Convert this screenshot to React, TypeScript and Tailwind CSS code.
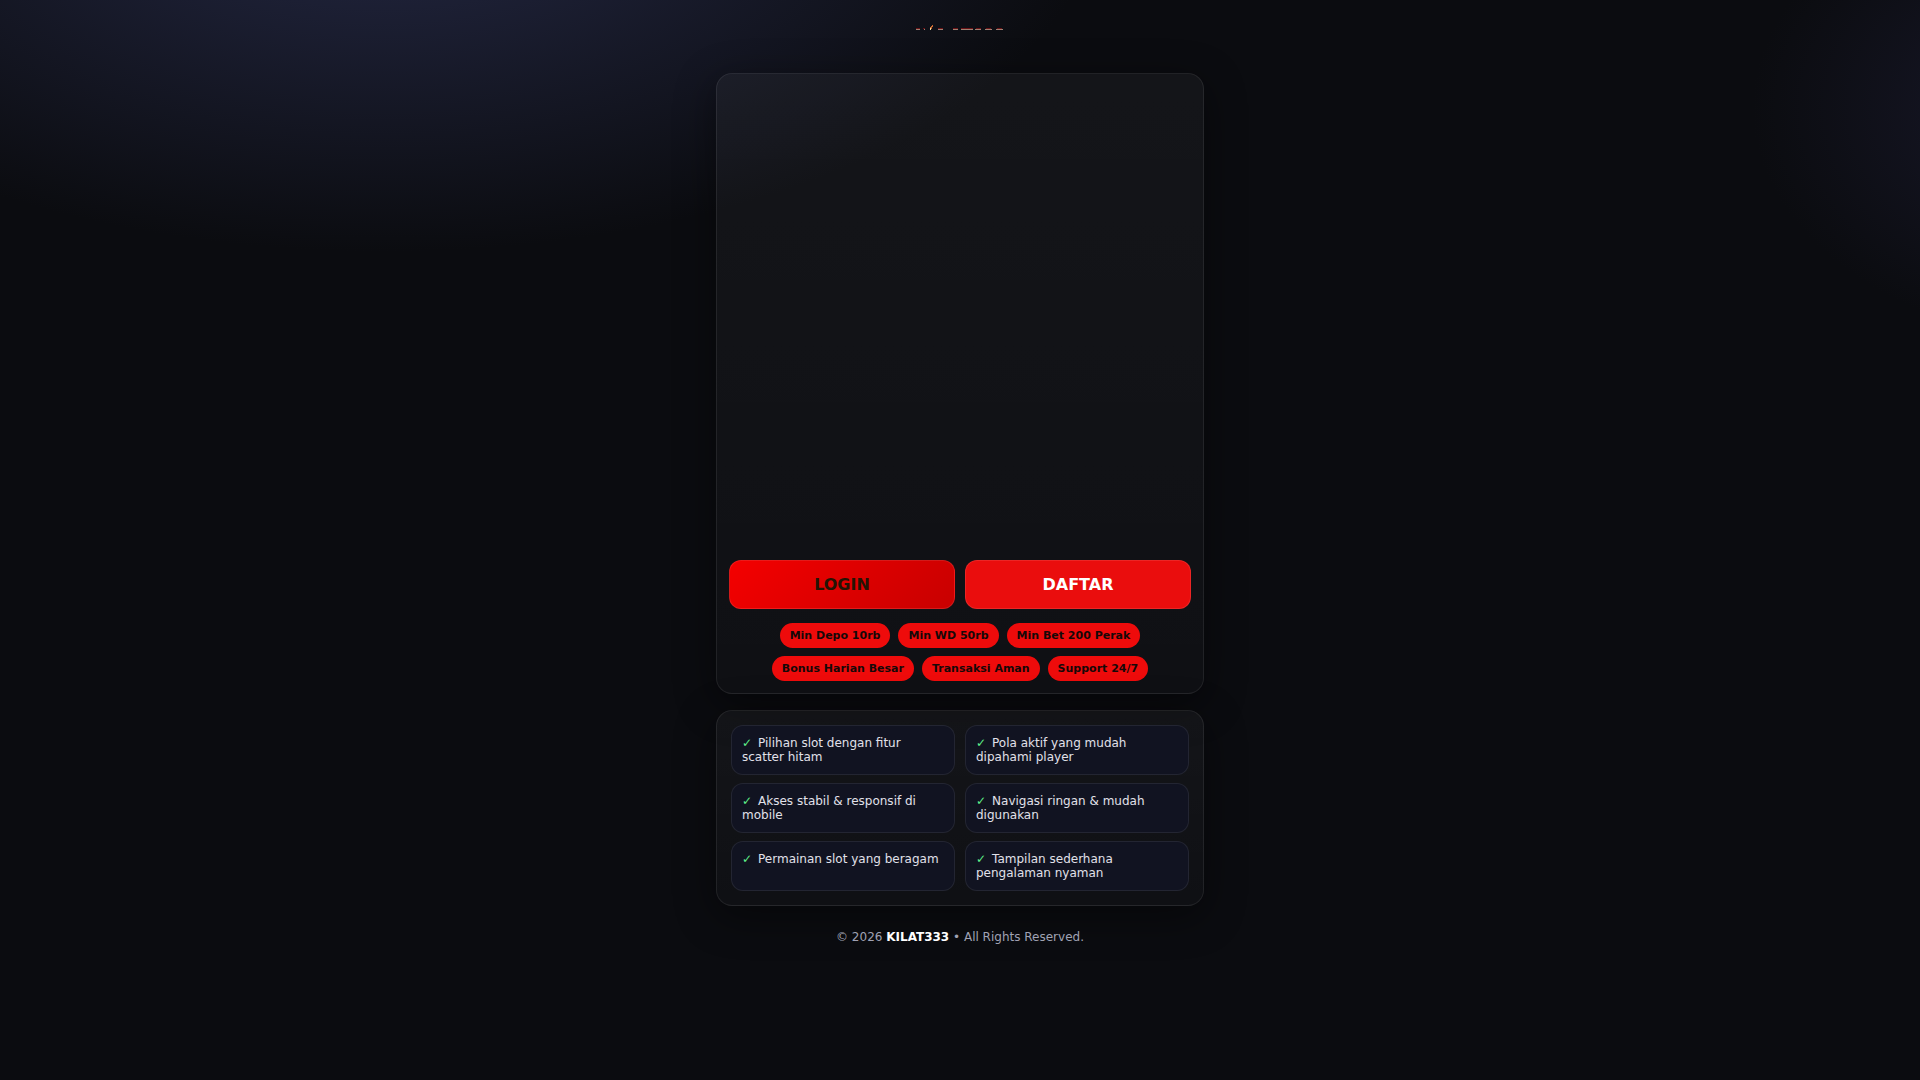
const actions = [
  {
    label: "LOGIN",
    className: "bg-linear-135 from-[#f40000] to-[#c80000] text-[#241404]",
  },
  {
    label: "DAFTAR",
    className: "bg-[#ea0d0d] text-white",
  },
];

const chips = [
  "Min Depo 10rb",
  "Min WD 50rb",
  "Min Bet 200 Perak",
  "Bonus Harian Besar",
  "Transaksi Aman",
  "Support 24/7",
];

const features = [
  "Pilihan slot dengan fitur scatter hitam",
  "Pola aktif yang mudah dipahami player",
  "Akses stabil & responsif di mobile",
  "Navigasi ringan & mudah digunakan",
  "Permainan slot yang beragam",
  "Tampilan sederhana pengalaman nyaman",
];

function Logo() {
  return (
    <svg width="88" height="6" viewBox="0 0 88 6" role="img" aria-label="KILAT333">
      <path d="M0 4.5h4M7 4.5h2M22 4.5h5M37 4.5h5M45 4.5h12M60 4.5h5M70 4.5h5M81 4.5h5" stroke="#6a1215" />
      <path d="M0 5.5h4M8 5.5h1M22 5.5h5M37 5.5h5M45 5.5h12M59 5.5h6M69 5.5h7M80 5.5h7" stroke="#a08072" />
      <path d="M16 1h1v2h-1v2h-2v-2h1v-1h1z" fill="#c5682f" />
      <path d="M14 4h1v2h-1z" fill="#f3d9a0" />
    </svg>
  );
}

export default function App() {
  return (
    <div className="min-h-screen bg-[#0b0c10] bg-[radial-gradient(1200px_600px_at_20%_-10%,#242844_0%,transparent_60%),radial-gradient(600px_400px_at_110%_10%,#1a1a2e_0%,transparent_60%)] font-['DejaVu_Sans',sans-serif] text-[#e1e1ea]">
      <div className="mx-auto max-w-[520px] px-4 pt-6">
        <header className="flex h-[49px] justify-center">
          <Logo />
        </header>

        <main className="flex flex-col gap-4">
          <section className="rounded-2xl border border-white/8 bg-linear-to-b from-white/4 to-white/2 p-3 shadow-[0_10px_40px_rgba(0,0,0,0.45)]">
            {/* Banner area */}
            <div className="aspect-square w-full" />
            <div className="mt-3 grid grid-cols-2 gap-2.5">
              {actions.map((action) => (
                <a
                  key={action.label}
                  href="#"
                  className={`rounded-xl border border-white/10 py-3 text-center text-base leading-[23px] font-bold ${action.className}`}
                >
                  {action.label}
                </a>
              ))}
            </div>
            <div className="mt-3.5 flex flex-wrap justify-center gap-2">
              {chips.map((chip) => (
                <span
                  key={chip}
                  className="rounded-full bg-[#ee0b0b] px-2.5 py-1.5 text-[11px] leading-[13px] font-bold text-[#160808]"
                >
                  {chip}
                </span>
              ))}
            </div>
          </section>

          <section className="rounded-2xl border border-white/8 bg-linear-to-b from-white/4 to-white/2 p-3.5 shadow-[0_10px_40px_rgba(0,0,0,0.45)]">
            <ul className="grid grid-cols-2 gap-x-2.5 gap-y-2">
              {features.map((feature) => (
                <li
                  key={feature}
                  className="rounded-xl border border-white/8 bg-[#111321] p-2.5 text-xs leading-[14px]"
                >
                  <span className="mr-1.5 text-[#5ff08a]">✓</span>
                  {feature}
                </li>
              ))}
            </ul>
          </section>
        </main>

        <footer className="py-6 text-center text-xs leading-[14px] text-[#a0a2b4]">
          © 2026 <strong className="text-white">KILAT333</strong> • All Rights Reserved.
        </footer>
      </div>
    </div>
  );
}
